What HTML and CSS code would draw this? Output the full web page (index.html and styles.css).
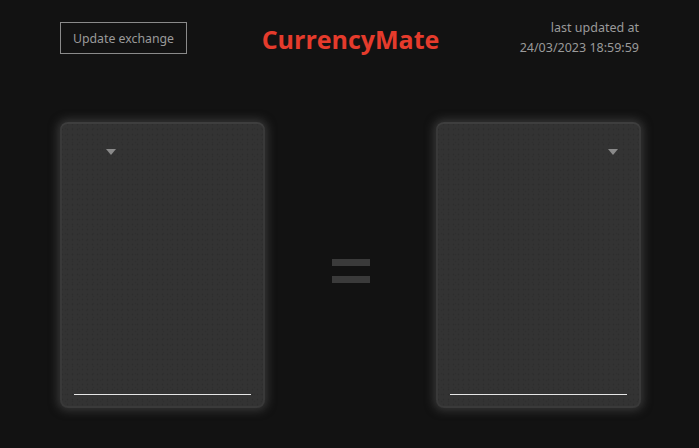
FILE: index.html
```html
<!DOCTYPE html>
<html lang="en">
<head>
<meta charset="utf-8">
<title>CurrencyMate</title>
<link rel="stylesheet" href="styles.css">
</head>
<body>
<div class="page">
  <header class="header">
    <button class="update-btn" type="button">Update exchange</button>
    <h1 class="title">CurrencyMate</h1>
    <div class="updated">
      <div>last updated at</div>
      <div>24/03/2023 18:59:59</div>
    </div>
  </header>
  <main class="converter">
    <section class="card card-left">
      <div class="select-row select-left"><span class="arrow"></span></div>
      <div class="amount-line"></div>
    </section>
    <div class="equals">
      <span class="bar"></span>
      <span class="bar"></span>
    </div>
    <section class="card card-right">
      <div class="select-row select-right"><span class="arrow"></span></div>
      <div class="amount-line"></div>
    </section>
  </main>
</div>
</body>
</html>
```

FILE: styles.css
```css
html, body {
  margin: 0;
  padding: 0;
  background: #121212;
  height: 100%;
}
.page {
  width: 699px;
  height: 448px;
  box-sizing: border-box;
  padding: 22px 58px 0 60px;
  font-family: "Noto Sans", "Open Sans", sans-serif;
}
.header {
  display: grid;
  grid-template-columns: 1fr auto 1fr;
  align-items: start;
  height: 100px;
}
.update-btn {
  justify-self: start;
  background: transparent;
  border: 1px solid #8a8a8a;
  color: #9a9a9a;
  font-family: "Noto Sans", "Open Sans", sans-serif;
  font-size: 12.3px;
  height: 32px;
  padding: 0 12px;
  cursor: pointer;
}
.title {
  margin: 0;
  color: #e53b2c;
  font-family: "Open Sans", "Noto Sans", sans-serif;
  font-weight: 700;
  font-size: 25px;
  line-height: 34px;
}
.updated {
  justify-self: end;
  text-align: right;
  color: #9a9a9a;
  font-size: 12.5px;
  line-height: 20px;
  margin-top: -4px;
  margin-right: 2px;
}
.converter {
  display: flex;
  justify-content: space-between;
  align-items: center;
}
.card {
  width: 205px;
  height: 286px;
  box-sizing: border-box;
  border-radius: 8px;
  background-color: #333333;
  background-image:
    radial-gradient(circle, #2d2d2d 0.7px, transparent 1.1px),
    radial-gradient(circle, #2f2f2f 0.7px, transparent 1.1px);
  background-size: 5px 5px, 7px 7px;
  background-position: 0 0, 2px 3px;
  box-shadow: 0 0 9px 3px rgba(85, 85, 85, 0.5), inset 0 2px 0 #3e3e3e, inset 2px 0 0 #393939, inset -2px 0 0 #393939, inset 0 -2px 0 #3a3a3a;
  display: flex;
  flex-direction: column;
  justify-content: space-between;
  padding: 27px 14px 13px 14px;
}
.select-row {
  display: flex;
  height: 8px;
}
.select-left { padding-left: 32px; }
.select-right { justify-content: flex-end; padding-right: 9px; }
.arrow {
  width: 0;
  height: 0;
  border-left: 5px solid transparent;
  border-right: 5px solid transparent;
  border-top: 6px solid #8a8a8a;
}
.amount-line {
  height: 1px;
  background: #e6e6e6;
}
.equals {
  display: flex;
  flex-direction: column;
  gap: 10px;
  margin-top: 12px;
}
.bar {
  display: block;
  width: 38px;
  height: 7px;
  background: #3a3a3a;
}
```
